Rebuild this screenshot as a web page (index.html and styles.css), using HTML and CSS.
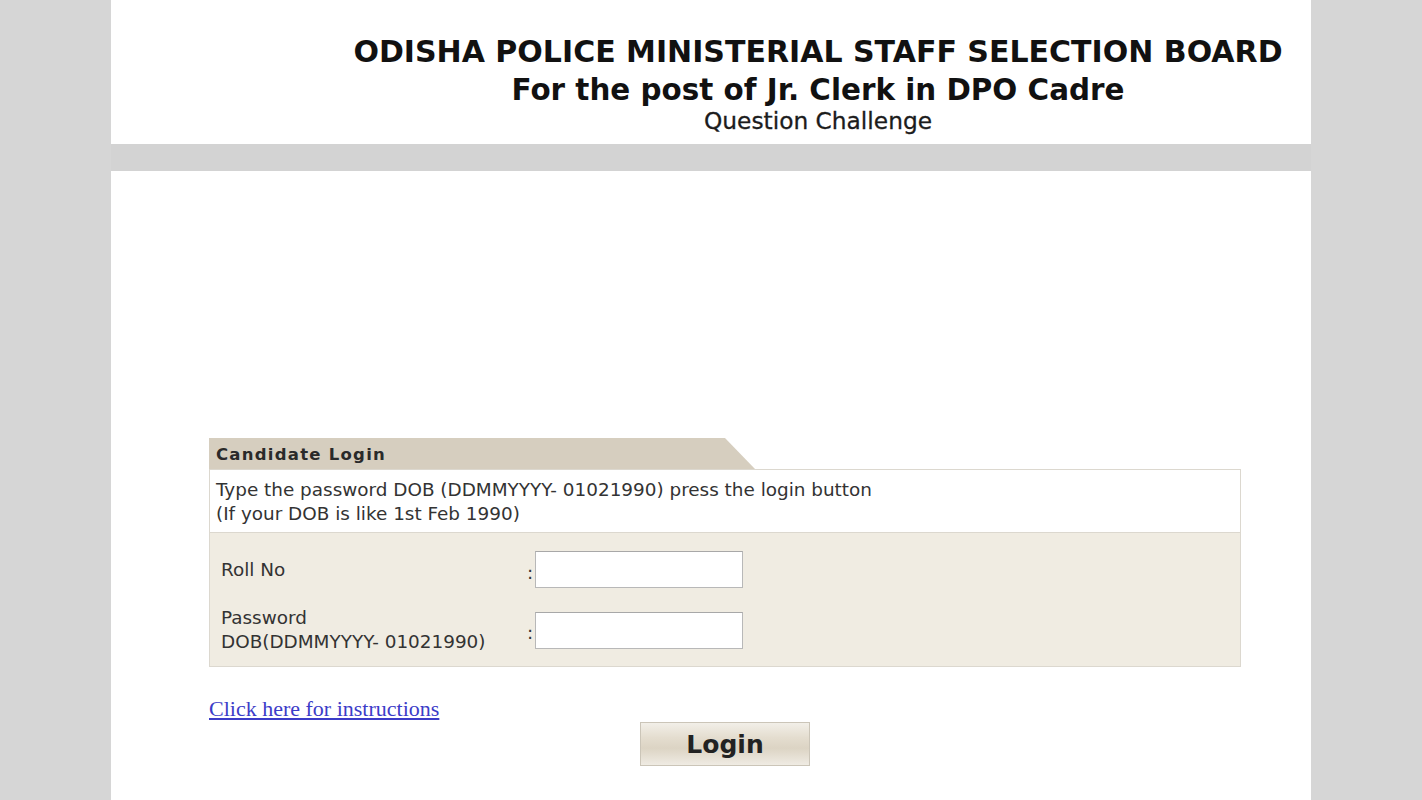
FILE: index.html
```html
<!DOCTYPE html>
<html lang="en">
<head>
<meta charset="utf-8">
<title>Odisha Police Ministerial Staff Selection Board - Question Challenge</title>
<link rel="stylesheet" href="styles.css">
</head>
<body>
<div class="page">
  <header class="header">
    <div class="logo-space"></div>
    <div class="titles">
      <div class="title-main">ODISHA POLICE MINISTERIAL STAFF SELECTION BOARD</div>
      <div class="title-sub">For the post of Jr. Clerk in DPO Cadre</div>
      <div class="title-small">Question Challenge</div>
    </div>
  </header>
  <div class="band"></div>
  <main class="content">
    <div class="login-wrap">
      <div class="tab">Candidate Login</div>
      <div class="box">
        <div class="note">
          Type the password DOB (DDMMYYYY- 01021990) press the login button<br>
          (If your DOB is like 1st Feb 1990)
        </div>
        <div class="fields">
          <div class="label">Roll No</div>
          <div class="colon">:</div>
          <input class="field" type="text">
          <div class="label">Password<br>DOB(DDMMYYYY- 01021990)</div>
          <div class="colon">:</div>
          <input class="field" type="password">
        </div>
      </div>
      <a class="instr" href="#">Click here for instructions</a>
      <div class="btn-row"><button class="btn" type="button">Login</button></div>
    </div>
  </main>
</div>
</body>
</html>
```
FILE: styles.css
```css
html, body {
  margin: 0;
  padding: 0;
}
body {
  background: #d6d6d6;
  font-family: "DejaVu Sans", Verdana, sans-serif;
  color: #333;
}
.page {
  width: 1200px;
  margin: 0 auto;
  height: 800px;
  display: flex;
  flex-direction: column;
}
.header {
  background: #fff;
  height: 144px;
  display: flex;
}
.logo-space {
  width: 214px;
  flex: none;
}
.titles {
  flex: 1;
  text-align: center;
  padding-top: 32px;
  color: #111;
}
.title-main {
  font-weight: bold;
  font-size: 30px;
  line-height: 39px;
}
.title-sub {
  font-weight: bold;
  font-size: 29.4px;
  line-height: 39px;
}
.title-small {
  font-size: 23.3px;
  line-height: 22px;
  color: #1c1c1c;
  -webkit-text-stroke: 0.3px #1c1c1c;
}
.band {
  height: 27px;
  background: #d3d3d3;
  flex: none;
}
.content {
  flex: 1;
  background: #fff;
  padding: 267px 0 0 98px;
}
.login-wrap {
  width: 1032px;
}
.tab {
  width: 546px;
  height: 31px;
  box-sizing: border-box;
  background: #d6cebf;
  clip-path: polygon(0 0, 516px 0, 100% 100%, 0 100%);
  font-weight: bold;
  font-size: 16.5px;
  letter-spacing: 1.25px;
  line-height: 33px;
  padding-left: 7px;
  color: #2a2a2a;
}
.box {
  border: 1px solid #dcd8cf;
}
.note {
  background: #fff;
  font-size: 18.4px;
  line-height: 24px;
  padding: 8px 6px 6px 6px;
  border-bottom: 1px solid #dcd8cf;
}
.fields {
  background: #f0ece2;
  display: grid;
  grid-template-columns: 306px 8px 208px;
  align-items: center;
  row-gap: 18px;
  padding: 18px 11px 12px 11px;
  font-size: 18.4px;
  line-height: 24px;
}
.colon {
  padding-top: 6px;
}
.field {
  width: 208px;
  height: 37px;
  box-sizing: border-box;
  margin: 0;
  border: 1px solid #b8b8b8;
  border-top-color: #a8a8a8;
  background: #fff;
}
.instr {
  display: inline-block;
  margin-top: 30px;
  font-family: "Liberation Serif", "Times New Roman", serif;
  font-size: 22px;
  line-height: 24px;
  color: #3c3cc8;
}
.btn-row {
  display: flex;
  justify-content: center;
  margin-top: 1px;
}
.btn {
  width: 170px;
  height: 44px;
  border: 1px solid #cbc5b8;
  background: linear-gradient(#f2efe8 0%, #e4ddcf 35%, #dcd4c4 60%, #efebe3 100%);
  font-family: "DejaVu Sans", Verdana, sans-serif;
  font-weight: bold;
  font-size: 25px;
  color: #222;
  padding: 0;
}
```
